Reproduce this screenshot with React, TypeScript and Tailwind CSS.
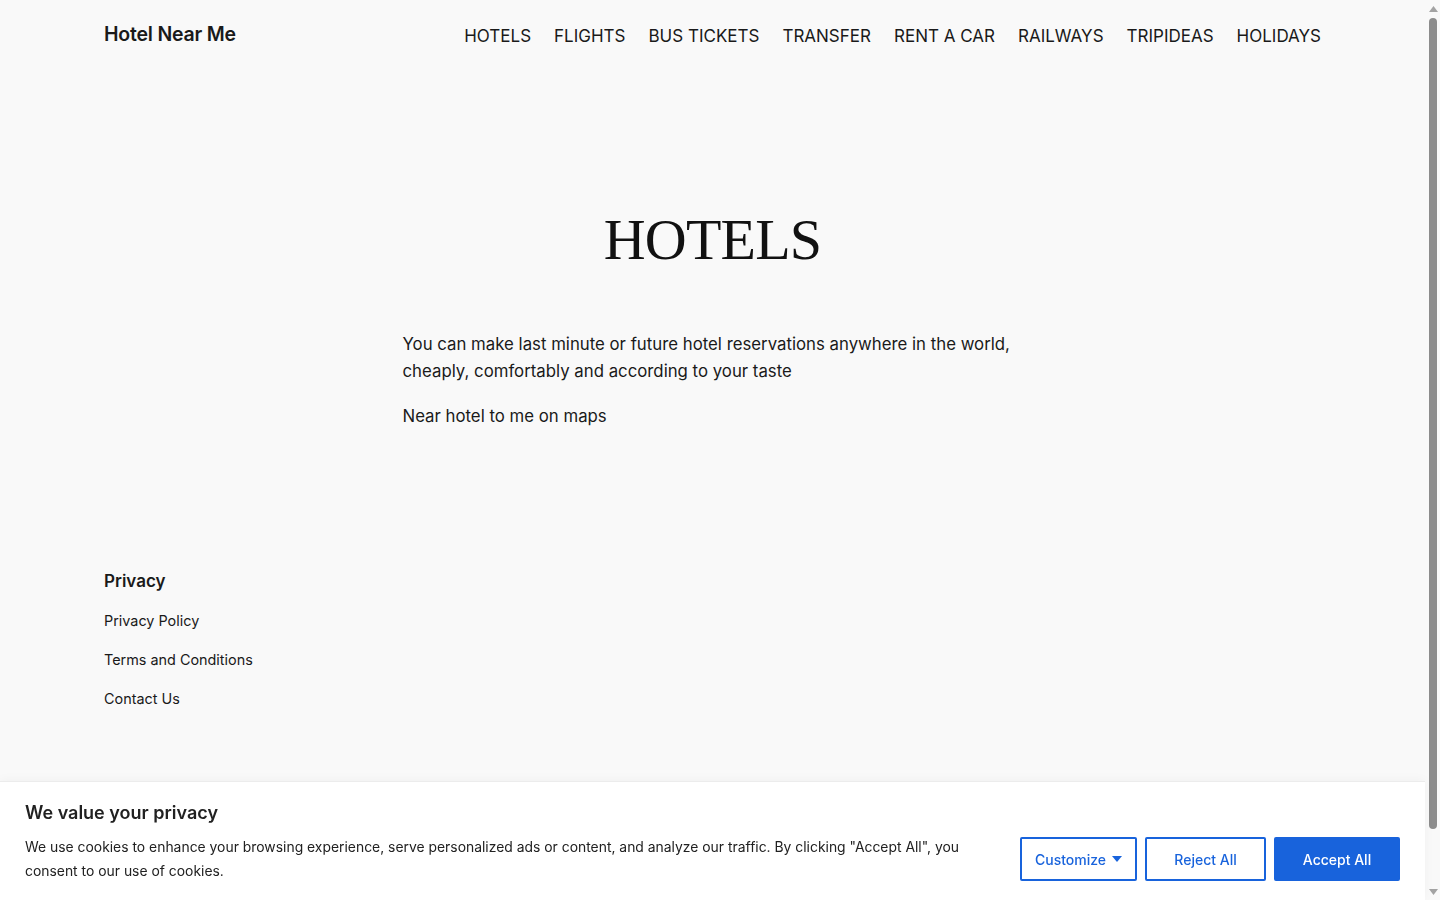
import { useState } from 'react'

const navLinks = ['HOTELS', 'FLIGHTS', 'BUS TICKETS', 'TRANSFER', 'RENT A CAR', 'RAILWAYS', 'TRIPIDEAS', 'HOLIDAYS']

const footerLinks = ['Privacy Policy', 'Terms and Conditions', 'Contact Us']

export default function App() {
  const [showBanner, setShowBanner] = useState(true)

  return (
    <div className="min-h-screen bg-[#f9f9f9] text-[#1a1a1a] font-['Inter','Noto_Sans',sans-serif]">
      <div className="mr-[15px]">
        {/* Header */}
        <header className="flex items-center justify-between px-[104px] h-[68px]">
          <a href="#" className="mt-[2px] text-[19.5px] font-semibold tracking-[-0.2px] text-[#1a1a1a]">Hotel Near Me</a>
          <nav className="flex items-center gap-[23px] mt-[6px]">
            {navLinks.map((l) => (
              <a key={l} href="#" className="text-[17px] text-[#1a1a1a]">{l}</a>
            ))}
          </nav>
        </header>

        {/* Main */}
        <main className="pt-[143px]">
          <h1 className="text-center text-[58px] leading-none text-[#111] font-['Liberation_Serif','DejaVu_Serif',serif] tracking-[-0.8px]">
            HOTELS
          </h1>
          <div className="max-w-[620px] mx-auto mt-[62px] text-[16.8px] leading-[27px] text-[#1a1a1a]">
            <p>You can make last minute or future hotel reservations anywhere in the world, cheaply, comfortably and according to your taste</p>
            <p className="mt-[18px]">Near hotel to me on maps</p>
          </div>
        </main>

        {/* Footer */}
        <footer className="px-[104px] pt-[139px] pb-[120px]">
          <h2 className="text-[17px] font-semibold leading-[24px]">Privacy</h2>
          <ul className="mt-[15px] flex flex-col gap-[14px]">
            {footerLinks.map((l) => (
              <li key={l}>
                <a href="#" className="text-[14.4px] leading-[24px] text-[#1a1a1a]">{l}</a>
              </li>
            ))}
          </ul>
        </footer>
      </div>

      {/* Scrollbar */}
      <div className="fixed top-0 right-0 w-[15px] h-screen bg-[#f9f9f9] flex flex-col items-center">
        <svg width="9" height="6" viewBox="0 0 9 6" className="mt-[6px] ml-[1px]"><path d="M0 6L4.5 0 9 6z" fill="#a3a3a3" /></svg>
        <div className="mt-[6px] ml-[1px] w-[8px] h-[811px] rounded-full bg-[#8c8c8c]" />
        <div className="flex-1" />
        <svg width="9" height="6" viewBox="0 0 9 6" className="mb-[5px] ml-[1px]"><path d="M0 0h9L4.5 6z" fill="#a3a3a3" /></svg>
      </div>

      {/* Cookie banner */}
      {showBanner && (
        <div className="fixed bottom-0 left-0 right-[15px] bg-white border-t border-[#ececec] shadow-[0_-1px_10px_rgba(0,0,0,0.04)] px-[25px] pt-[19px] pb-[17px]">
          <h3 className="text-[18px] font-semibold leading-[24px] text-[#212121]">We value your privacy</h3>
          <div className="flex items-center mt-[10px]">
            <p className="flex-1 text-[13.9px] leading-[24px] text-[#212121]">
              We use cookies to enhance your browsing experience, serve personalized ads or content, and analyze our traffic. By clicking "Accept All", you consent to our use of cookies.
            </p>
            <div className="flex items-center gap-[8px] ml-[24px]">
              <button className="h-[44px] w-[117px] border-2 border-[#1863dc] rounded-[2px] text-[#1863dc] text-[14px] font-medium flex items-center justify-center gap-[6px]">
                Customize
                <svg width="10" height="6" viewBox="0 0 10 6"><path d="M0 0h10L5 6z" fill="#1863dc" /></svg>
              </button>
              <button onClick={() => setShowBanner(false)} className="h-[44px] w-[121px] border-2 border-[#1863dc] rounded-[2px] text-[#1863dc] text-[14px] font-medium">
                Reject All
              </button>
              <button onClick={() => setShowBanner(false)} className="h-[44px] w-[126px] border-2 border-[#1863dc] bg-[#1863dc] rounded-[2px] text-white text-[14px] font-medium">
                Accept All
              </button>
            </div>
          </div>
        </div>
      )}
    </div>
  )
}
